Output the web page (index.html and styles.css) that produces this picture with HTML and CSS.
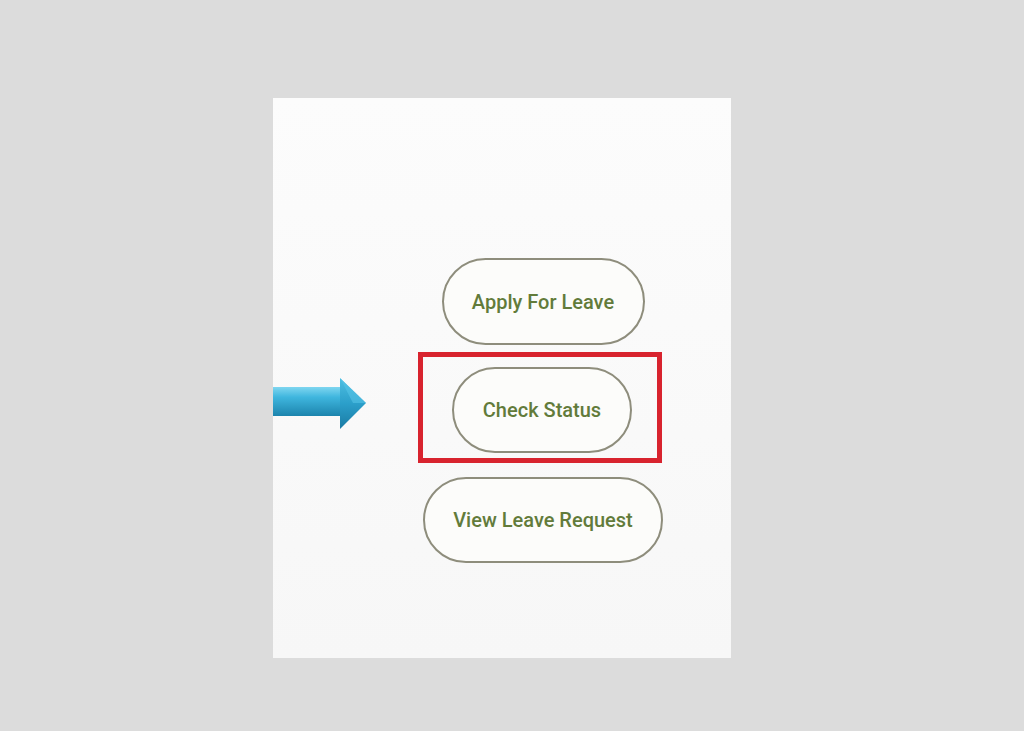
FILE: index.html
```html
<!DOCTYPE html>
<html lang="en">
<head>
  <meta charset="UTF-8">
  <meta name="viewport" content="width=device-width, initial-scale=1.0">
  <title>Leave Menu</title>
  <link rel="stylesheet" href="styles.css">
</head>
<body>
  <div class="screen">
    <!-- Pointer arrow (annotation) -->
    <svg class="pointer-arrow" viewBox="0 0 95 54" width="95" height="54">
      <defs>
        <linearGradient id="shaft" x1="0" y1="0" x2="0" y2="1">
          <stop offset="0" stop-color="#7fd6f0"/>
          <stop offset="0.35" stop-color="#3fb6de"/>
          <stop offset="1" stop-color="#1c84ad"/>
        </linearGradient>
        <linearGradient id="head" x1="0" y1="0" x2="0" y2="1">
          <stop offset="0" stop-color="#4fbfe2"/>
          <stop offset="0.5" stop-color="#2b9fca"/>
          <stop offset="1" stop-color="#1a7aa3"/>
        </linearGradient>
      </defs>
      <rect x="0" y="10" width="70" height="29" fill="url(#shaft)"/>
      <polygon points="67,1 93,26 67,52" fill="url(#head)"/>
      <polygon points="67,1 93,26 80,26" fill="#55c3e6" opacity="0.6"/>
    </svg>

    <div class="menu">
      <button class="menu-btn btn-apply">Apply For Leave</button>
      <div class="highlight-box">
        <button class="menu-btn btn-status">Check Status</button>
      </div>
      <button class="menu-btn btn-view">View Leave Request</button>
    </div>
  </div>
</body>
</html>
```

FILE: styles.css
```css
body {
  margin: 0;
  background-color: #dcdcdc;
  font-family: Roboto, 'Noto Sans', Arial, sans-serif;
  height: 731px;
  overflow: hidden;
}
.screen {
  position: relative;
  width: 458px;
  height: 560px;
  margin: 98px 0 0 273px;
  background: linear-gradient(#fcfcfc, #f7f7f7);
}
.pointer-arrow {
  position: absolute;
  left: 0;
  top: 279px;
}
.menu {
  display: flex;
  flex-direction: column;
  align-items: center;
  padding: 160px 0 0 82px;
}
.menu-btn {
  height: 87px;
  border: 2px solid #8e8d7c;
  border-radius: 44px;
  background-color: #fcfcfa;
  color: #627b3a;
  font-family: Roboto, 'Noto Sans', Arial, sans-serif;
  font-size: 20px;
  font-weight: 500;
  padding: 0;
}
.btn-apply {
  width: 203px;
}
.btn-status {
  width: 180px;
  height: 86px;
}
.btn-view {
  width: 240px;
  height: 86px;
  margin-top: 14px;
}
.highlight-box {
  box-sizing: border-box;
  width: 244px;
  height: 111px;
  margin-top: 7px;
  margin-left: -6px;
  border: 5px solid #d8232e;
  padding: 10px 0 0 29px;
}
```
